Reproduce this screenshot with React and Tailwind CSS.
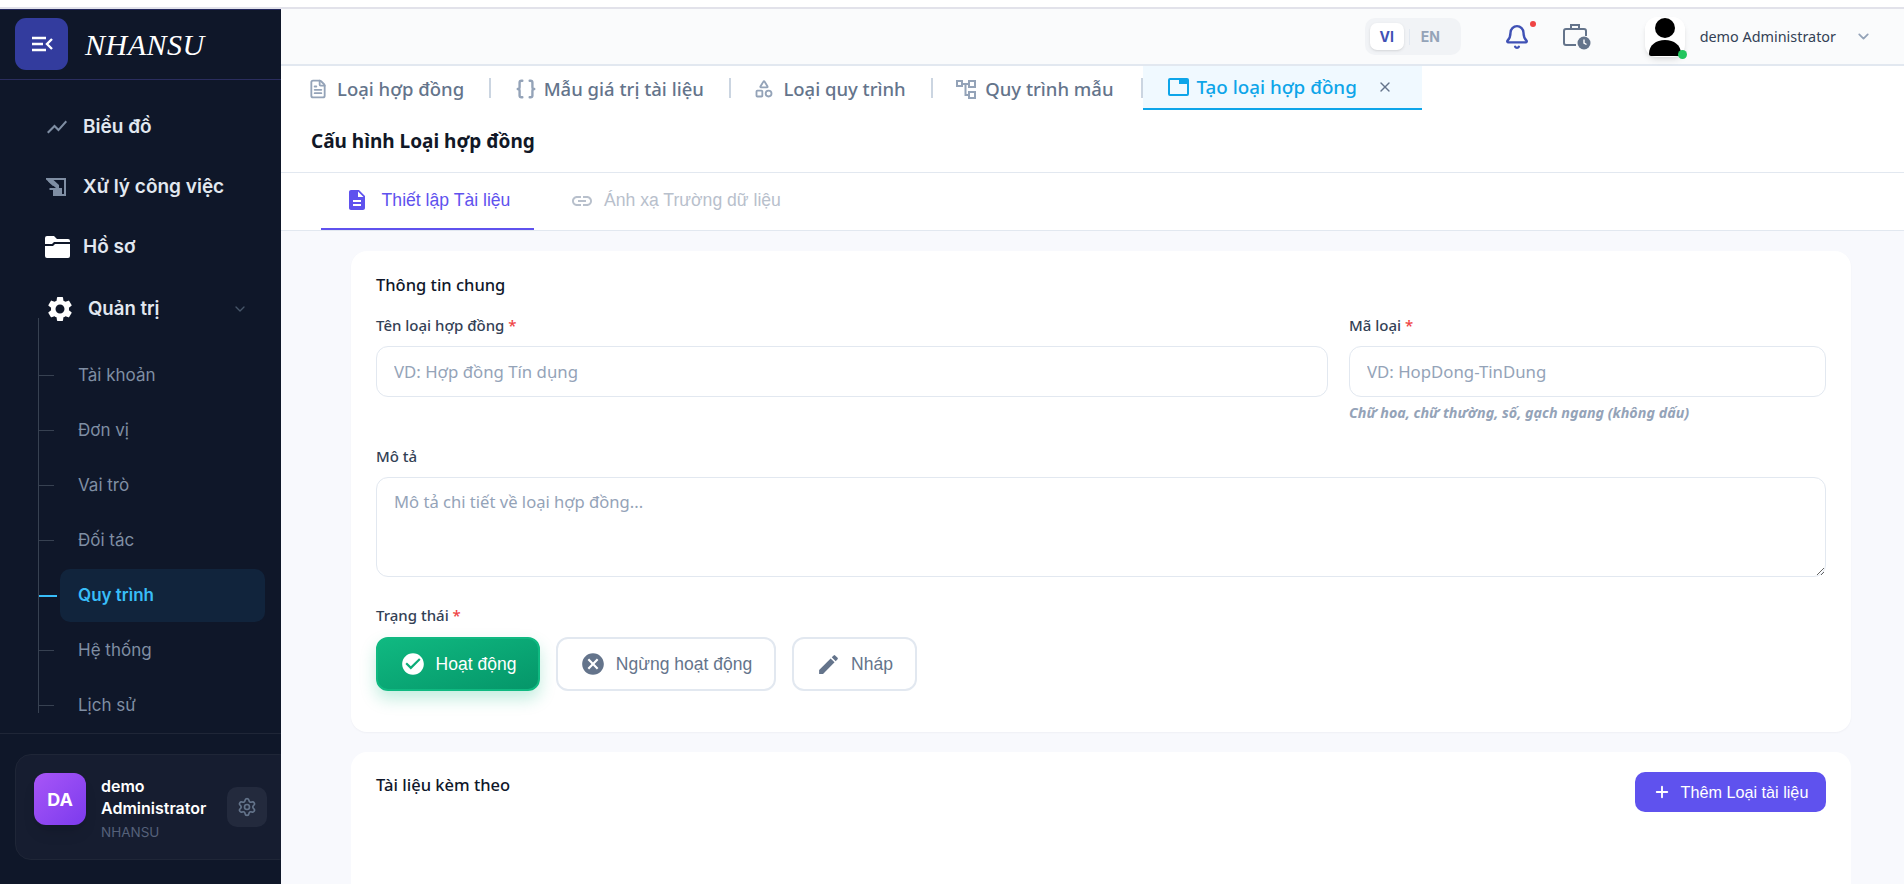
import React from "react";
import { ChevronDown, FileText, Braces, Shapes, X, Plus, Settings, Bell } from "lucide-react";
import { MdDescription, MdLink, MdCheckCircle, MdCancel, MdEdit, MdSettings, MdShowChart } from "react-icons/md";

const inter = "font-['Inter',sans-serif]";
const noto = "font-['Noto_Sans',sans-serif]";
const arial = "font-['Liberation_Sans',sans-serif]";

function Logo() {
  return (
    <svg width="22" height="16" viewBox="0 0 22 16" fill="none">
      <path d="M1 2h14M1 8h11M1 14h14" stroke="#fff" strokeWidth="2.4" />
      <path d="M21 3l-5 5 5 5" stroke="#fff" strokeWidth="2.4" />
    </svg>
  );
}

function TaskIcon() {
  return (
    <svg width="22" height="20" viewBox="0 0 22 20" fill="#7f8ea3">
      <path d="M1 1h20v18H8v-2h11V3H8.5l5.5 5v3h3v6H8v-4H4.5v-2h6.5L1 2.5z" />
      <path d="M3 4.5l2-1.5 5 4.5-2 1.5z" />
    </svg>
  );
}

function FolderIcon() {
  return (
    <svg width="25" height="22" viewBox="0 0 25 22">
      <path d="M0 2a2 2 0 0 1 2-2h7l3 3h11a2 2 0 0 1 2 2v1H9L7 8H0z" fill="#fff" />
      <path d="M0 10h8l2-2h15v12a2 2 0 0 1-2 2H2a2 2 0 0 1-2-2z" fill="#fff" />
    </svg>
  );
}

function FlowIcon() {
  return (
    <svg width="20" height="20" viewBox="0 0 20 20" fill="none" stroke="#94a3b8" strokeWidth="2">
      <rect x="1" y="2" width="5" height="5" />
      <rect x="13" y="2" width="6" height="6" />
      <rect x="13" y="13" width="6" height="6" />
      <path d="M6 5h7M9.5 5v11H13" />
    </svg>
  );
}

function WindowIcon() {
  return (
    <svg width="21" height="18" viewBox="0 0 21 18">
      <rect x="1" y="1" width="19" height="16" rx="1" fill="none" stroke="#0ea5e9" strokeWidth="2" />
      <rect x="11" y="1" width="9" height="5" fill="#0ea5e9" />
    </svg>
  );
}

function CaseClock() {
  return (
    <svg width="28" height="27" viewBox="0 0 28 27" fill="none">
      <path d="M13 22H3a2 2 0 0 1-2-2V8a2 2 0 0 1 2-2h18a2 2 0 0 1 2 2v5" stroke="#64748b" strokeWidth="2" />
      <path d="M8 6V2h8v4" stroke="#64748b" strokeWidth="2" />
      <circle cx="21" cy="20" r="6.5" fill="#64748b" />
      <path d="M21 16.5V20l2.5 1.5" stroke="#fff" strokeWidth="1.4" />
    </svg>
  );
}

function Person() {
  return (
    <svg width="32" height="38" viewBox="0 0 32 38" fill="#000">
      <circle cx="16" cy="10" r="10" />
      <path d="M0 36c0-9 7-14 16-14s16 5 16 14c0 1-1 2-2 2H2c-1 0-2-1-2-2z" />
    </svg>
  );
}

function MainNav({ icon, label }) {
  return (
    <div className="flex items-center h-[60px]">
      <div className="w-[38px] ml-[45px] flex items-center">{icon}</div>
      <span className={`text-[19px] font-semibold text-[#e2e8f0] ${inter}`}>{label}</span>
    </div>
  );
}

function SubNav({ label, active }) {
  return (
    <div className="flex items-center h-[55px] relative">
      <div className={active ? "w-[18px] h-[2px] bg-[#38bdf8]" : "w-[15px] h-px bg-[#374151]"} />
      <div
        className={`flex items-center ${active ? "ml-[3px] w-[205px] h-[53px] rounded-[10px] bg-[#11243c] pl-[18px] font-semibold text-[#38bdf8]" : "ml-[24px] text-[#7f8ea3]"} text-[17px] ${inter}`}
      >
        {label}
      </div>
    </div>
  );
}

function Sidebar() {
  return (
    <aside className="w-[281px] shrink-0 h-full bg-[#0f1729] flex flex-col overflow-hidden border-t border-[#24285c]">
      <div className="h-[70px] shrink-0 flex items-center pl-[15px] border-b border-[#2a2d5e] pb-px">
        <div className="w-[53px] h-[52px] rounded-[11px] bg-[#333c9e] flex items-center justify-center">
          <Logo />
        </div>
        <span className="ml-[17px] text-white text-[30px] italic font-['Liberation_Serif',serif] tracking-[0.5px]">NHANSU</span>
      </div>
      <div className="h-[654px] shrink-0 border-b border-[#1f2637] pt-[17px]">
        <MainNav icon={<MdShowChart size={24} color="#7f8ea3" />} label="Biểu đồ" />
        <MainNav icon={<TaskIcon />} label="Xử lý công việc" />
        <MainNav icon={<FolderIcon />} label="Hồ sơ" />
        <div className="flex items-center h-[64px] pl-[45px] pr-[33px]">
          <MdSettings size={30} color="#fff" />
          <span className={`ml-[13px] text-[18.6px] font-semibold text-[#e2e8f0] flex-1 ${inter}`}>Quản trị</span>
          <ChevronDown size={16} color="#475569" />
        </div>
        <div className="ml-[38px] -mt-[23px] border-l border-[#374151] h-[395px] pt-[30px]">
          <SubNav label="Tài khoản" />
          <SubNav label="Đơn vị" />
          <SubNav label="Vai trò" />
          <SubNav label="Đối tác" />
          <SubNav label="Quy trình" active />
          <SubNav label="Hệ thống" />
          <SubNav label="Lịch sử" />
        </div>
      </div>
      <div className="pt-[20px] pl-[15px]">
        <div className="w-[280px] h-[106px] rounded-[16px] border border-[#1f2637] bg-[#161d30] flex items-start pl-[18px]">
          <div className="w-[52px] h-[52px] mt-[18px] rounded-[12px] bg-gradient-to-br from-[#a855f7] to-[#7c3aed] flex items-center justify-center text-white font-bold text-[18px] font-['Inter',sans-serif] shadow-lg">
            DA
          </div>
          <div className={`ml-[15px] w-[126px] pt-[20px] ${inter}`}>
            <div className="text-white text-[16px] font-semibold leading-[22px]">demo Administrator</div>
            <div className="text-[#55617a] text-[13.5px] leading-[26px]">NHANSU</div>
          </div>
          <div className="w-[40px] h-[40px] mt-[32px] rounded-[10px] bg-[#232a3d] flex items-center justify-center">
            <Settings size={20} color="#64748b" />
          </div>
        </div>
      </div>
    </aside>
  );
}

function Header() {
  return (
    <header className="h-[57px] shrink-0 bg-[#fafbfc] border-b-2 border-[#e2e8f0] flex items-center">
      <div className="ml-auto flex items-center">
        <div className="w-[96px] h-[37px] rounded-[10px] bg-[#f1f3f6] flex items-center pl-[5px]">
          <div className={`w-[34px] h-[27px] rounded-[7px] bg-white shadow-sm flex items-center justify-center text-[14px] font-bold text-[#3f51b5] ${inter}`}>VI</div>
          <div className="w-px h-[16px] bg-[#e2e8f0] ml-[5px]" />
          <div className={`ml-[11px] text-[14px] font-bold text-[#94a3b8] ${inter}`}>EN</div>
        </div>
        <div className="relative ml-[43px]">
          <Bell size={26} color="#3f51b5" strokeWidth={2.2} />
          <span className="absolute -top-[3px] right-[-6px] w-[6px] h-[6px] rounded-full bg-[#ef4444]" />
        </div>
        <div className="ml-[33px]"><CaseClock /></div>
        <div className="relative ml-[54px] w-[40px] h-[40px] rounded-[12px] bg-white shadow-md flex items-center justify-center">
          <Person />
          <span className="absolute -bottom-[2px] -right-[2px] w-[9px] h-[9px] rounded-full bg-[#22c55e]" />
        </div>
        <span className={`ml-[15px] text-[14.4px] text-[#334155] ${noto}`}>demo Administrator</span>
        <ChevronDown className="ml-[19px] mr-[32px]" size={17} color="#94a3b8" strokeWidth={2.5} />
      </div>
    </header>
  );
}

function Tab({ icon, label }) {
  return (
    <div className={`flex items-center h-[44px] pt-[2px] ${noto}`}>
      <div className="w-[29px] -ml-[2px] flex items-center">{icon}</div>
      <span className="text-[18.5px] font-medium text-[#64748b]">{label}</span>
    </div>
  );
}

function Sep() {
  return <div className="w-[2px] h-[20px] bg-[#cbd5e1] ml-[25px] mr-[25.5px]" />;
}

function Tabs() {
  return (
    <div className="h-[44px] shrink-0 flex items-center pl-[29px] bg-white">
      <Tab icon={<FileText size={20} color="#94a3b8" strokeWidth={2.2} />} label="Loại hợp đồng" />
      <Sep />
      <Tab icon={<Braces size={22} color="#94a3b8" strokeWidth={2.6} />} label="Mẫu giá trị tài liệu" />
      <Sep />
      <Tab icon={<Shapes size={20} color="#94a3b8" strokeWidth={2.2} />} label="Loại quy trình" />
      <Sep />
      <Tab icon={<FlowIcon />} label="Quy trình mẫu" />
      <div className="w-[2px] h-[20px] bg-[#cbd5e1] ml-[27px]" />
      <div className={`w-[279px] h-[44px] bg-[#f0f9ff] border-b-2 border-[#0ea5e9] flex items-center pl-[25px] ${noto}`}>
        <WindowIcon />
        <span className="ml-[8px] text-[18.8px] font-medium text-[#0ea5e9]">Tạo loại hợp đồng</span>
        <X size={16} color="#64748b" className="ml-[20px]" />
      </div>
    </div>
  );
}

function Label({ children, required, className = "" }) {
  return (
    <div className={`text-[15px] leading-[20px] font-medium text-[#334155] ${noto} ${className}`}>
      {children} {required && <span className="text-[#ef4444]">*</span>}
    </div>
  );
}

function StatusBtn({ icon, label, active, width }) {
  return (
    <div
      className={`h-[54px] rounded-[12px] flex items-center justify-center gap-[10px] text-[17.5px] ${arial} ${width} ${
        active
          ? "bg-gradient-to-br from-[#10b981] to-[#059669] text-white shadow-[0_8px_16px_rgba(16,185,129,0.25)] border-2 border-[#10b981]"
          : "bg-white border-2 border-[#e2e8f0] text-[#64748b]"
      }`}
    >
      {icon}
      {label}
    </div>
  );
}

function Field({ placeholder, className }) {
  return (
    <input
      readOnly
      placeholder={placeholder}
      className={`h-[51px] w-full rounded-[12px] border border-[#e2e8f0] bg-white px-[17px] text-[16.8px] placeholder:text-[#94a3b8] outline-none ${noto} ${className || ""}`}
    />
  );
}

function Content() {
  return (
    <div className="flex-1 bg-[#f8f9fd] pt-[20px] pl-[70px] pr-[53px] overflow-hidden">
      <section className="h-[481px] bg-white rounded-[16px] shadow-[0_1px_2px_rgba(15,23,42,0.04)] px-[25px] pt-[22px]">
        <h3 className={`text-[16.5px] leading-[24px] font-medium text-[#0f172a] ${noto}`}>Thông tin chung</h3>
        <div className="flex gap-[21px] mt-[18px]">
          <div className="flex-1">
            <Label required>Tên loại hợp đồng</Label>
            <Field placeholder="VD: Hợp đồng Tín dụng" className="mt-[11px]" />
          </div>
          <div className="w-[477px]">
            <Label required>Mã loại</Label>
            <Field placeholder="VD: HopDong-TinDung" className="mt-[11px]" />
            <div className={`mt-[7px] text-[14.3px] leading-[18px] italic font-bold text-[#94a3b8] ${noto}`}>Chữ hoa, chữ thường, số, gạch ngang (không dấu)</div>
          </div>
        </div>
        <Label className="mt-[24px]">Mô tả</Label>
        <textarea
          readOnly
          placeholder="Mô tả chi tiết về loại hợp đồng..."
          className={`mt-[11px] block h-[100px] w-full rounded-[12px] border border-[#e2e8f0] bg-white px-[17px] py-[12px] text-[16.6px] placeholder:text-[#94a3b8] outline-none ${noto}`}
        />
        <Label required className="mt-[28px]">Trạng thái</Label>
        <div className="flex gap-[16px] mt-[12px]">
          <StatusBtn active width="w-[164px]" label="Hoạt động" icon={<MdCheckCircle size={26} color="#fff" />} />
          <StatusBtn width="w-[220px]" label="Ngừng hoạt động" icon={<MdCancel size={26} color="#64748b" />} />
          <StatusBtn width="w-[125px]" label="Nháp" icon={<MdEdit size={25} color="#64748b" />} />
        </div>
      </section>
      <section className="mt-[20px] h-[200px] bg-white rounded-[16px] px-[25px] pt-[20px] flex items-start justify-between">
        <h3 className={`text-[16.5px] leading-[26px] font-medium text-[#0f172a] ${noto}`}>Tài liệu kèm theo</h3>
        <div className={`w-[191px] h-[40px] rounded-[10px] bg-[#5f52ee] text-white flex items-center justify-center gap-[10px] text-[16.2px] ${arial}`}>
          <Plus size={18} color="#fff" strokeWidth={2.5} />
          Thêm Loại tài liệu
        </div>
      </section>
    </div>
  );
}

export default function App() {
  return (
    <div className="w-[1904px] h-[884px] overflow-hidden bg-white flex flex-col">
      <div className="h-[7px] shrink-0 bg-white" />
      <div className="h-[2px] shrink-0 bg-[#e2e2ea]" />
      <div className="flex-1 flex min-h-0">
        <Sidebar />
        <main className="flex-1 min-w-0 flex flex-col">
          <Header />
          <Tabs />
          <div className="h-[63px] shrink-0 bg-white border-b border-[#e2e8f0] flex items-center pl-[30px]">
            <h1 className={`text-[19px] font-bold text-[#111827] ${noto}`}>Cấu hình Loại hợp đồng</h1>
          </div>
          <div className="h-[58px] shrink-0 bg-white border-b border-[#e2e8f0] flex pl-[40px]">
            <div className={`w-[213px] h-[57px] border-b-[2px] border-[#5f52ee] pb-[1px] flex items-center justify-center gap-[13px] text-[17.6px] text-[#5f52ee] ${arial}`}>
              <MdDescription size={24} color="#5f52ee" />
              Thiết lập Tài liệu
            </div>
            <div className={`ml-[36px] pb-[2px] flex items-center gap-[10px] text-[17.6px] text-[#b8c0cc] ${arial}`}>
              <MdLink size={24} color="#b8c0cc" />
              Ánh xạ Trường dữ liệu
            </div>
          </div>
          <Content />
        </main>
      </div>
    </div>
  );
}
